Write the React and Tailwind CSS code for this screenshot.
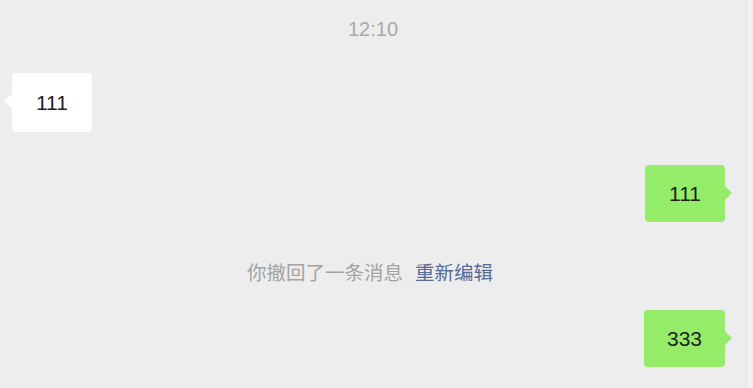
export default function App() {
  const font = { fontFamily: '"Liberation Sans", "Noto Sans CJK SC", sans-serif' };
  return (
    <div className="w-[753px] h-[388px] bg-[#ededed] flex overflow-hidden" style={font}>
      <div className="w-[746px] flex flex-col">
        <div className="pt-[19px] h-[39px] text-center text-[20px] leading-[20px] text-[#a9a9a9]">12:10</div>
        <div className="mt-[34px] pl-[12px] flex">
          <div className="relative h-[59px] px-[24px] bg-white rounded-[4px] flex items-center text-[21px] text-[#1f1f1f]">
            111
            <span className="absolute left-[-8px] top-[21px] w-0 h-0 border-y-[7px] border-y-transparent border-r-[8px] border-r-white" />
          </div>
        </div>
        <div className="mt-[33px] pr-[21px] flex justify-end">
          <div className="relative h-[57px] px-[24px] bg-[#95ec69] rounded-[4px] flex items-center text-[21px] text-[#1f1f1f]">
            111
            <span className="absolute right-[-7px] top-[21px] w-0 h-0 border-y-[7px] border-y-transparent border-l-[7px] border-l-[#95ec69]" />
          </div>
        </div>
        <div className="mt-[39px] h-[24px] flex justify-center items-center text-[19.5px] leading-[24px] pr-[6px]">
          <span className="text-[#a3a3a3] mr-[12px]">你撤回了一条消息</span>
          <span className="text-[#576b95]">重新编辑</span>
        </div>
        <div className="mt-[25px] pr-[21px] flex justify-end">
          <div className="relative h-[57px] px-[23px] bg-[#95ec69] rounded-[4px] flex items-center text-[21px] text-[#1f1f1f]">
            333
            <span className="absolute right-[-7px] top-[21px] w-0 h-0 border-y-[7px] border-y-transparent border-l-[7px] border-l-[#95ec69]" />
          </div>
        </div>
      </div>
      <div className="w-[7px] border-l border-[#e3e3e3] bg-[#f0f0f0]" />
    </div>
  );
}
